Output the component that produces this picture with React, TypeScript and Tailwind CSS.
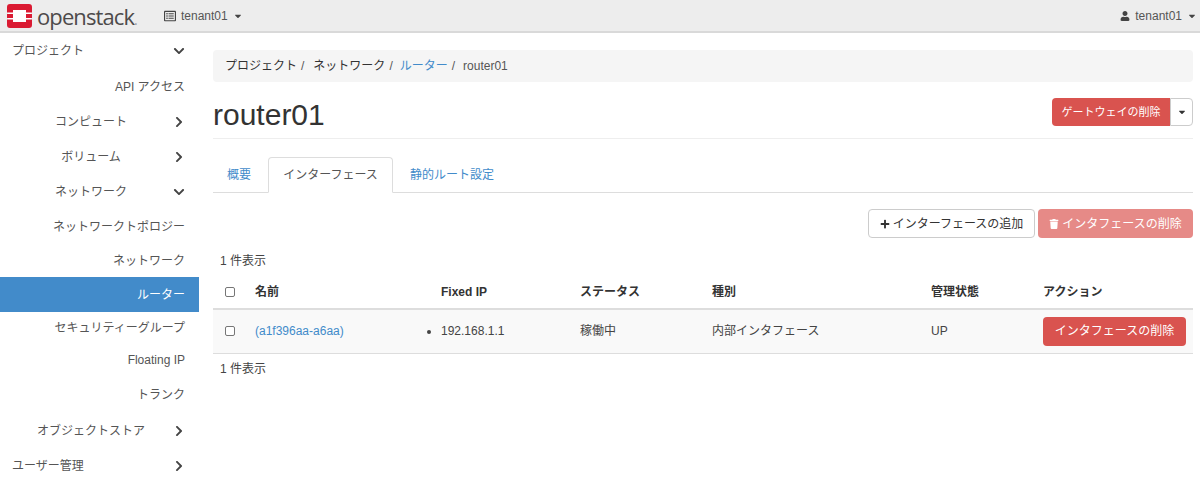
import { FaUser, FaPlus, FaTrash, FaCaretDown, FaChevronDown, FaChevronRight, FaRegListAlt } from "react-icons/fa";
import { ReactNode } from "react";

const Logo = () => (
  <svg width="25" height="24" viewBox="0 0 25 24" className="shrink-0">
    <rect x="1" y="1" width="23" height="22" fill="#fff" />
    <path fill="#da1a32" d="M3 0h19a3 3 0 0 1 3 3v5.500h-6V6H6v2.500H0V3a3 3 0 0 1 3-3z" />
    <path fill="#da1a32" d="M0 15.500h6V18h13v-2.500h6V21a3 3 0 0 1-3 3H3a3 3 0 0 1-3-3z" />
    <rect x="0" y="10" width="6" height="4" fill="#da1a32" />
    <rect x="19" y="10" width="6" height="4" fill="#da1a32" />
  </svg>
);

const SideItem = ({ label, h, open, closed, top, active }: { label: string; h: string; open?: boolean; closed?: boolean; top?: boolean; active?: boolean }) => {
  const chevron = open || closed;
  return (
    <li className={`flex items-center pr-[14px] ${h} ${active ? "bg-[#428bca] text-white" : "text-[#555]"}`}>
      <span className={`flex-1 ${top ? "pl-3 text-left" : chevron ? "pl-[30px] text-center" : "text-right"}`}>{label}</span>
      {open && <FaChevronDown className="ml-[21px] w-[12px] text-[12px] text-[#444]" />}
      {closed && <FaChevronRight className="ml-[21px] w-[12px] text-[12px] text-[#444]" />}
    </li>
  );
};

const Tab = ({ children, active, className }: { children: ReactNode; active?: boolean; className?: string }) => (
  <li className={`-mb-px flex h-[36px] items-center rounded-t ${className} ${active ? "border border-[#ddd] border-b-white bg-white text-[#555]" : "text-[#428bca]"}`}>{children}</li>
);

const Checkbox = () => <span className="block h-[10px] w-[10px] rounded-[2px] border border-[#767676] bg-white" />;

export default function App() {
  return (
    <div className="h-[488px] w-[1200px] overflow-hidden bg-white font-['Liberation_Sans','Noto_Sans_CJK_JP',sans-serif] text-[12px] text-[#444]">
      <header className="flex h-[33px] items-center justify-between border-b-2 border-[#d9d9d9] bg-[#ededed] pl-[7px] pr-[3px]">
        <div className="flex items-center">
          <Logo />
          <span className="ml-[5px] w-[103px] font-['Open_Sans',sans-serif] text-[22px] font-medium leading-none tracking-[-0.9px] text-[#4d4a4a]">openstack<span className="text-[14px] text-[#999]">.</span></span>
          <span className="ml-[24px] flex items-center gap-[5px] text-[#555]">
            <FaRegListAlt className="text-[12px] text-[#444]" />
            tenant01
            <FaCaretDown className="text-[10px] text-[#444]" />
          </span>
        </div>
        <div className="flex items-center gap-[5px] text-[#555]">
          <FaUser className="text-[10px] text-[#444]" />
          tenant01
          <FaCaretDown className="text-[10px] text-[#444]" />
        </div>
      </header>
      <div className="flex">
        <aside className="w-[199px] shrink-0">
          <ul>
            <SideItem h="h-[36px]" label="プロジェクト" open top />
            <SideItem h="h-[35px]" label="API アクセス" />
            <SideItem h="h-[35px]" label="コンピュート" closed />
            <SideItem h="h-[36px]" label="ボリューム" closed />
            <SideItem h="h-[34px]" label="ネットワーク" open />
            <SideItem h="h-[35px]" label="ネットワークトポロジー" />
            <SideItem h="h-[33px]" label="ネットワーク" />
            <SideItem h="h-[35px]" label="ルーター" active />
            <SideItem h="h-[31px]" label="セキュリティーグループ" />
            <SideItem h="h-[34px]" label="Floating IP" />
            <SideItem h="h-[36px]" label="トランク" />
            <SideItem h="h-[36px]" label="オブジェクトストア" closed />
            <SideItem h="h-[34px]" label="ユーザー管理" closed top />
          </ul>
        </aside>
        <main className="box-content w-[980px] pl-[14px] pt-[17px]">
          <nav className="flex h-[32px] items-center rounded bg-[#f5f5f5] px-[12px]">
            <span className="text-[#333]">プロジェクト</span>
            <span className="px-[4px] text-[#555]">/</span>
            <span className="ml-[5px] text-[#333]">ネットワーク</span>
            <span className="px-[4px] text-[#555]">/</span>
            <span className="ml-[3px] text-[#428bca]">ルーター</span>
            <span className="px-[4px] text-[#555]">/</span>
            <span className="ml-[4px] text-[#555]">router01</span>
          </nav>
          <div className="mt-[10px] flex h-[47px] items-center justify-between border-b border-[#eee]">
            <h1 className="text-[30px] font-normal leading-none text-[#333]">router01</h1>
            <div className="mb-[6px] flex h-[28px] text-[11px]">
              <button className="w-[118px] rounded-l bg-[#d9534f] text-white">ゲートウェイの削除</button>
              <button className="flex w-[23px] items-center justify-center rounded-r border border-[#ccc] bg-white"><FaCaretDown className="text-[10px] text-[#333]" /></button>
            </div>
          </div>
          <ul className="mt-[18px] flex border-b border-[#ddd]">
            <Tab className="pl-[14px] pr-[17px]">概要</Tab>
            <Tab active className="w-[125px] justify-center">インターフェース</Tab>
            <Tab className="pl-[17px]">静的ルート設定</Tab>
          </ul>
          <div className="mt-[16px] flex justify-end gap-[3px]">
            <button className="flex h-[29px] w-[167px] items-center justify-center gap-[3px] rounded border border-[#ccc] bg-white text-[#333]"><FaPlus className="text-[10px]" />インターフェースの追加</button>
            <button className="flex h-[29px] w-[155px] items-center justify-center gap-[3px] rounded bg-[#e68a87] text-white"><FaTrash className="text-[10px]" />インタフェースの削除</button>
          </div>
          <p className="mt-[15px] h-[17px] pl-[7px] leading-[17px] text-[#444]">1 件表示</p>
          <table className="mt-[6px] w-[980px] table-fixed border-collapse">
            <colgroup>
              <col className="w-[34px]" />
              <col className="w-[186px]" />
              <col className="w-[139px]" />
              <col className="w-[132px]" />
              <col className="w-[219px]" />
              <col className="w-[112px]" />
              <col className="w-[158px]" />
            </colgroup>
            <thead>
              <tr className="h-[33px] border-b-2 border-[#ddd] text-left font-bold text-[#333]">
                <th className="pl-[12px]"><Checkbox /></th>
                <th className="px-[8px]">名前</th>
                <th className="px-[8px]">Fixed IP</th>
                <th className="px-[8px]">ステータス</th>
                <th className="px-[8px]">種別</th>
                <th className="px-[8px]">管理状態</th>
                <th className="px-[8px]">アクション</th>
              </tr>
            </thead>
            <tbody>
              <tr className="h-[44px] border-b border-[#ddd] bg-[#f9f9f9]">
                <td className="pl-[12px]"><Checkbox /></td>
                <td className="px-[8px] text-[#428bca]">(a1f396aa-a6aa)</td>
                <td className="px-[8px]"><ul className="list-disc"><li>192.168.1.1</li></ul></td>
                <td className="px-[8px]">稼働中</td>
                <td className="px-[8px]">内部インタフェース</td>
                <td className="px-[8px]">UP</td>
                <td className="px-[8px]"><button className="h-[29px] w-[143px] rounded bg-[#d9534f] text-white">インタフェースの削除</button></td>
              </tr>
            </tbody>
          </table>
          <p className="mt-[7px] pl-[7px] leading-[17px]">1 件表示</p>
        </main>
      </div>
    </div>
  );
}
